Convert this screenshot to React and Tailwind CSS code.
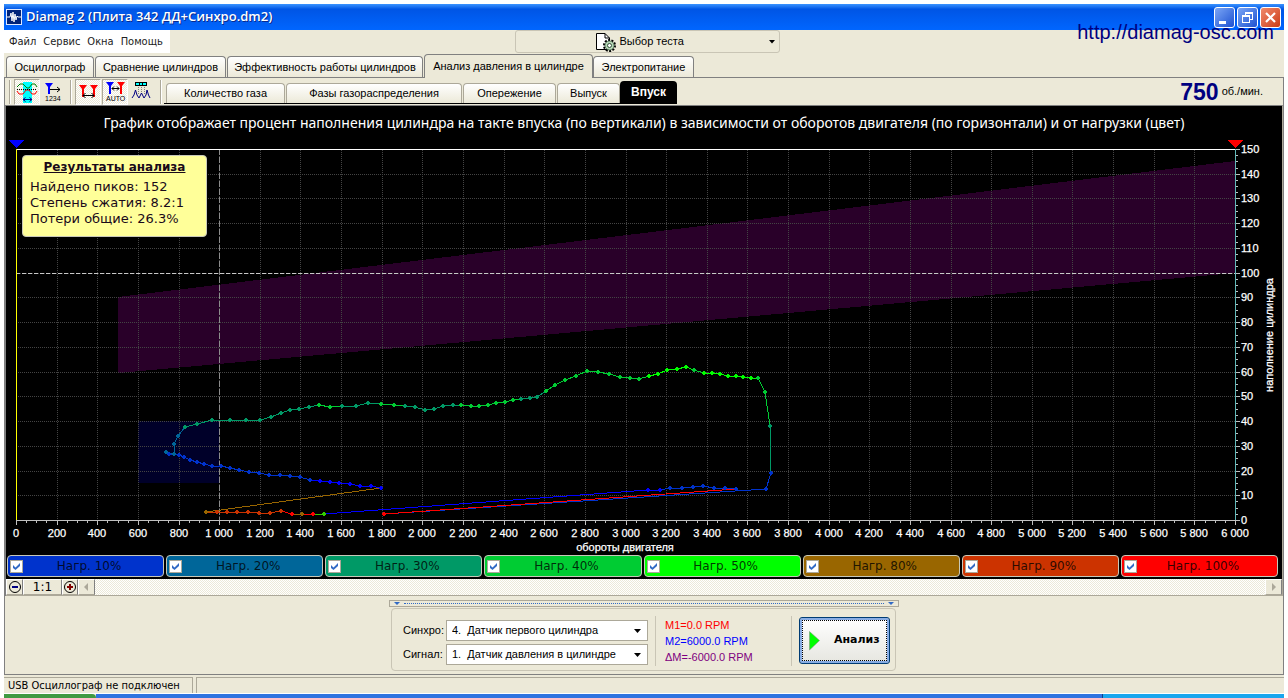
import { useState } from "react";

const LOADS = [
    { id: 10, label: "Нагр. 10%", bg: "bg-[#0033cc]" },
    { id: 20, label: "Нагр. 20%", bg: "bg-[#006699]" },
    { id: 30, label: "Нагр. 30%", bg: "bg-[#009966]" },
    { id: 40, label: "Нагр. 40%", bg: "bg-[#00cc33]" },
    { id: 50, label: "Нагр. 50%", bg: "bg-[#00ff00]" },
    { id: 80, label: "Нагр. 80%", bg: "bg-[#996600]" },
    { id: 90, label: "Нагр. 90%", bg: "bg-[#cc3300]" },
    { id: 100, label: "Нагр. 100%", bg: "bg-[#ff0000]" },
];

const COLORS = {
    0: "#0000ff",
    10: "#0033cc",
    20: "#006699",
    30: "#009966",
    40: "#00cc33",
    50: "#00ff00",
    60: "#33cc00",
    80: "#996600",
    90: "#cc3300",
    100: "#ff0000",
};

// measured cycle: x, y, load
const POINTS = [
    [384, 514, 100], [766, 489, 10], [771, 473, 10], [770, 426, 30], [765, 392, 40], [758, 378, 40],
    [751, 378, 50], [743, 377, 50], [736, 376, 50], [728, 376, 50], [720, 374, 50], [712, 373, 50],
    [704, 373, 50], [694, 370, 40], [686, 367, 50], [677, 369, 50], [667, 370, 50], [658, 374, 50],
    [649, 376, 50], [639, 379, 40], [630, 378, 40], [620, 377, 40], [609, 374, 40], [598, 372, 40],
    [587, 371, 40], [576, 376, 40], [565, 380, 40], [555, 385, 40], [546, 391, 40], [537, 397, 30],
    [530, 398, 30], [521, 399, 30], [513, 400, 40], [505, 402, 40], [496, 403, 40], [488, 405, 40],
    [479, 406, 40], [471, 406, 40], [461, 405, 40], [453, 405, 30], [443, 406, 30], [434, 409, 30],
    [425, 410, 30], [415, 407, 30], [405, 406, 30], [394, 405, 40], [381, 404, 40], [368, 403, 30],
    [356, 406, 30], [342, 406, 30], [330, 407, 40], [319, 405, 40], [309, 407, 30], [299, 409, 30],
    [290, 410, 30], [281, 413, 30], [271, 417, 30], [260, 420, 30], [246, 420, 30], [230, 420, 30],
    [212, 420, 30], [197, 424, 30], [185, 427, 30], [178, 436, 20], [174, 444, 20], [174, 454, 20],
    [166, 452, 20], [169, 454, 10], [179, 455, 10], [184, 457, 10], [190, 460, 10], [197, 462, 10],
    [204, 464, 10], [212, 466, 10], [221, 466, 10], [230, 468, 10], [239, 470, 10], [249, 472, 10],
    [259, 473, 10], [269, 475, 10], [280, 475, 10], [290, 476, 10], [300, 477, 10], [310, 480, 10],
    [320, 481, 0], [330, 482, 0], [339, 483, 0], [350, 484, 0], [360, 486, 0], [371, 486, 0],
    [381, 488, 0], [206, 512, 80], [217, 512, 90], [227, 512, 90], [237, 512, 90], [248, 512, 90],
    [259, 513, 90], [270, 513, 90], [281, 511, 90], [292, 514, 100], [302, 514, 80], [313, 514, 100],
    [324, 514, 60], [648, 490, 0], [660, 490, 0], [670, 488, 10], [682, 488, 10], [693, 487, 10],
    [703, 486, 10], [714, 488, 10], [725, 488, 10], [736, 489, 10], [384, 514, 100],
];

const LEFT = 16;
const RIGHT = 1235;
const TOP = 149;
const BOTTOM = 520;
const xOf = (rpm) => Math.round(LEFT + (rpm / 6000) * (RIGHT - LEFT));
const yOf = (v) => Math.round(BOTTOM - (v / 150) * (BOTTOM - TOP));
const range = (from, to, step) => {
    const list = [];
    for (let i = from; i <= to; i += step) list.push(i);
    return list;
};
const spaced = (n) => (n >= 1000 ? `${Math.floor(n / 1000)} ${String(n % 1000).padStart(3, "0")}` : `${n}`);

function Chart() {
    return (
        <svg viewBox="6 136 1276 419" className="block w-full h-auto" fontFamily="'Liberation Sans', Arial, sans-serif" fontSize="11" fill="#fff">
            <g shapeRendering="crispEdges">
                <path d="M118 297 L1235 161 V273 L118 373 Z" fill="#290029" />
                <rect x="138" y="421" width="81" height="62" fill="#000029" />

                {/* grid */}
                {range(200, 5800, 200).map((r) => (
                    <path key={r} d={`M${xOf(r) + 0.5} ${TOP + 1} V${BOTTOM}`} stroke="#444" strokeDasharray="1 1" fill="none" />
                ))}
                {range(10, 140, 10).map((v) => (
                    <path key={v} d={`M${LEFT} ${yOf(v) + 0.5} H${RIGHT}`} stroke="#444" strokeDasharray="1 1" fill="none" />
                ))}
                <path d="M16 273.5 H1235" stroke="#c8c8c8" strokeDasharray="4 2" />
                <path d="M219.5 149 V520" stroke="#8c8c8c" strokeDasharray="6 2" />

                {/* frame */}
                <path d="M16 149.5 H1239" stroke="#fff" />
                <path d="M16 520.5 H1239" stroke="#c0c0c0" />
                <path d="M16.5 149 V520" stroke="#ffff00" />
                <path d="M1235.5 149 V520" stroke="#5fb8b8" />

                {/* ticks */}
                {range(0, 6000, 50).map((r) => (
                    <path key={r} d={`M${xOf(r) + 0.5} 521 v${r % 200 === 0 ? 4 : 2}`} stroke="#c0c0c0" />
                ))}
                {range(0, 150, 2.5).map((v) => (
                    <path key={v} d={`M1236 ${yOf(v) + 0.5} h${v % 10 === 0 ? 4 : 2}`} stroke="#c0c0c0" />
                ))}

                <path d="M8 140 h16 l-8 8 Z" fill="#0000ff" />
                <path d="M1227 140 h16 l-8 8 Z" fill="#ff0000" />
            </g>

            <g shapeRendering="crispEdges">
                {POINTS.slice(1).map(([x, y, load], i) => (
                    <line key={i} x1={POINTS[i][0]} y1={POINTS[i][1]} x2={x} y2={y} stroke={COLORS[load]} />
                ))}
                {POINTS.map(([x, y, load], i) => (
                    <path key={i} d={`M${x - 1} ${y - 2} h2 v1 h1 v2 h-1 v1 h-2 v-1 h-1 v-2 h1 Z`} fill={COLORS[load]} />
                ))}
            </g>

            <g textAnchor="middle" stroke="#fff" strokeWidth="0.25">
                {range(0, 6000, 200).map((r) => (
                    <text key={r} x={xOf(r)} y="537">{spaced(r)}</text>
                ))}
                <text x="625" y="551">обороты двигателя</text>
                <text transform="translate(1273 335) rotate(-90)">наполнение цилиндра</text>
            </g>
            <g stroke="#fff" strokeWidth="0.25">
                {range(0, 150, 10).map((v) => (
                    <text key={v} x="1241" y={yOf(v) + 4}>{v}</text>
                ))}
            </g>
        </svg>
    );
}

function TitleBar() {
    const btn = "flex h-[21px] w-[21px] items-center justify-center rounded-[3px] border border-white text-white";
    return (
        <header className="flex h-[26px] items-center gap-1 bg-linear-to-b from-[#3a93ff] via-[#0055e5] via-20% to-[#0066ff] pl-[2px] pr-[3px]">
            <svg viewBox="0 0 16 16" className="h-4 w-4">
                <rect width="16" height="16" fill="#dfe8ff" />
                <rect x="1" y="1" width="14" height="14" fill="#00247a" />
                <path d="M1 8 H4 L5 4 L6 12 L7 3 L8 13 L9 5 L10 11 L11 7 L12 8 H15" stroke="#fff" fill="none" />
            </svg>
            <h1 className="flex-1 font-['Open_Sans','Noto_Sans',sans-serif] text-[13px] font-semibold text-white [text-shadow:1px_1px_#0a2a8c]">
                Diamag 2 (Плита 342 ДД+Синхро.dm2)
            </h1>
            <div className="flex gap-[2px]">
                <button aria-label="Свернуть" className={`${btn} bg-linear-to-br from-[#7ba5f5] to-[#1f4fd0]`}>
                    <svg viewBox="0 0 19 19" className="h-[19px] w-[19px]"><path d="M4 13 h7 v3 h-7 Z" fill="#fff" /></svg>
                </button>
                <button aria-label="Восстановить" className={`${btn} bg-linear-to-br from-[#7ba5f5] to-[#1f4fd0]`}>
                    <svg viewBox="0 0 19 19" className="h-[19px] w-[19px]" fill="none" stroke="#fff" shapeRendering="crispEdges">
                        <path d="M7.5 7 V4.5 H14.5 V11.5 H12 M7 5.5 H15" />
                        <path d="M4.5 7.5 H11.5 V14.5 H4.5 Z M4 8.5 H12" />
                    </svg>
                </button>
                <button aria-label="Закрыть" className={`${btn} bg-linear-to-br from-[#f0896a] to-[#cc3a10]`}>
                    <svg viewBox="0 0 19 19" className="h-[19px] w-[19px]"><path d="M5 5 L14 14 M14 5 L5 14" stroke="#fff" strokeWidth="2.2" /></svg>
                </button>
            </div>
        </header>
    );
}

function MenuRow() {
    return (
        <div className="flex h-6 items-start">
            <nav className="flex h-[23px] w-[166px] items-center gap-[7px] bg-white pt-[2px] pl-[5px] font-['DejaVu_Sans_Condensed','DejaVu_Sans',sans-serif] text-[11px] text-[#222]">
                <button>Файл</button>
                <button>Сервис</button>
                <button>Окна</button>
                <button>Помощь</button>
            </nav>
            <div className="flex flex-1 justify-center pr-[160px]">
                <button className="flex h-[23px] w-[265px] items-center justify-end rounded-[3px] border border-[#c9c5b5] pr-1">
                    <svg viewBox="0 0 20 20" className="mr-1 h-5 w-5">
                        <path d="M0.5 1.5 H9 L13.5 6 V17.5 H0.5 Z" fill="#fff" stroke="#000" />
                        <path d="M9 1.5 V6 H13.5" fill="none" stroke="#000" />
                        <circle cx="13.5" cy="13.5" r="5.5" fill="none" stroke="#000" strokeWidth="2" strokeDasharray="2 1.4" />
                        <circle cx="13.5" cy="13.5" r="4.5" fill="#b5d6b5" stroke="#31513a" strokeWidth="0.7" />
                        <circle cx="13.5" cy="13.5" r="2" fill="#fff" stroke="#31513a" />
                    </svg>
                    <span className="w-[149px] text-left">Выбор теста</span>
                    <svg viewBox="0 0 6 4" className="h-1 w-1.5"><path d="M0 0 H6 L3 3.5 Z" /></svg>
                </button>
            </div>
        </div>
    );
}

function MainTabs() {
    const tab = "h-[21px] rounded-t-[4px] border border-b-0 border-[#808080] bg-linear-to-b from-white to-[#ece9d8] whitespace-nowrap";
    return (
        <div className="flex h-6 items-end gap-px border-b border-[#808080] pl-[2px]">
            <button className={`${tab} w-[88px]`}>Осциллограф</button>
            <button className={`${tab} w-[131px]`}>Сравнение цилиндров</button>
            <button className={`${tab} w-[196px]`}>Эффективность работы цилиндров</button>
            <button className="-mb-px h-6 w-[169px] rounded-t-[4px] border border-b-0 border-[#808080] bg-[#ece9d8] whitespace-nowrap">
                Анализ давления в цилиндре
            </button>
            <button className={`${tab} -ml-px w-[101px]`}>Электропитание</button>
        </div>
    );
}

const HATCH = "bg-[repeating-conic-gradient(#ffffff_0_25%,#ece9d8_0_50%)] bg-[length:2px_2px]";

function Separator() {
    return <span className="h-6 w-[2px] border-l border-[#aca899] bg-white" />;
}

function ToolButton({ label, pressed, children }) {
    return (
        <button
            aria-label={label}
            aria-pressed={pressed}
            className={`h-[26px] w-[26px] border ${pressed ? `${HATCH} border-t-[#aca899] border-l-[#aca899] border-r-white border-b-white` : "border-transparent"}`}
        >
            <svg viewBox="0 0 24 24" className="h-6 w-6" fill="none">{children}</svg>
        </button>
    );
}

function Toolbar() {
    const tab = "h-5 rounded-t-[4px] border border-b-0 border-[#aca899] bg-linear-to-b from-white to-[#ece9d8] whitespace-nowrap";
    return (
        <div className="flex h-[27px] items-center pl-1">
            <Separator />
            <div className="flex items-center gap-px px-[3px]">
                <ToolButton label="Фазы" pressed>
                    <path d="M8 2 H17 V23 H8 Z" fill="#00ffff" />
                    <path d="M2 7 L5 4 H8 L12 8 H14 L17 4 H20 L22 7" stroke="#008000" />
                    <path d="M2 11 L4 14 H8 L11 10 H14 L17 14 H20 L22 11" stroke="#ff0000" />
                    <path d="M2 9.5 H22" stroke="#000" strokeDasharray="1 1" />
                    <path d="M8 19.5 H17 M10.5 17.5 L8 19.5 L10.5 21.5 M14.5 17.5 L17 19.5 L14.5 21.5" stroke="#000080" />
                </ToolButton>
                <ToolButton label="Нумерация">
                    <path d="M3 3 H11 L8 7 V14 H6 V7 Z" fill="#0000ff" />
                    <path d="M8 9.5 H18 M15 7 L18 9.5 L15 12" stroke="#000" />
                    <text x="3" y="21" fontSize="7" fill="#000" fontFamily="'Liberation Sans', sans-serif">1234</text>
                </ToolButton>
            </div>
            <Separator />
            <div className="flex items-center gap-px pr-[5px] pl-[3px]">
                <ToolButton label="Маркеры" pressed>
                    <path d="M3 5 H11 L8 9 V17 H6 V9 Z M14 5 H22 L19 9 V17 H17 V9 Z" fill="#ff0000" />
                    <path d="M7 15.5 H18 M9.5 13 L7 15.5 L9.5 18 M15.5 13 L18 15.5 L15.5 18" stroke="#000" />
                </ToolButton>
                <ToolButton label="Автоматические маркеры" pressed>
                    <path d="M3 2 H11 L8 6 V14 H6 V6 Z" fill="#0000ff" />
                    <path d="M14 2 H22 L19 6 V14 H17 V6 Z" fill="#ff0000" />
                    <path d="M9 8.5 H16 M11 6.5 L9 8.5 L11 10.5 M14 6.5 L16 8.5 L14 10.5" stroke="#000" />
                    <text x="3" y="21" fontSize="7" fill="#000" fontFamily="'Liberation Sans', sans-serif">AUTO</text>
                </ToolButton>
                <ToolButton label="Осциллограмма">
                    <path d="M5 2 H17 V6 H5 Z" fill="#000" />
                    <path d="M6 3 H9 V5 H6 Z M10 3 H12 V5 H10 Z M13 3 H16 V5 H13 Z" fill="#00ffff" />
                    <path d="M8.5 7 V14 M11.5 7 V14 M14.5 7 V14" stroke="#808080" strokeDasharray="1 1" />
                    <path d="M2 18 L4 15 L5.5 10 L7 15 L9 18 L11.5 13 L14 18 L16 15 L17 10 L18.5 15 L20 18" stroke="#000080" />
                </ToolButton>
            </div>
            <Separator />
            <div className="flex h-full flex-1 items-end pl-[2px] pb-px">
                <div className="flex items-end gap-px border-b border-black pl-[2px]">
                    <button className={`${tab} w-[119px]`}>Количество газа</button>
                    <button className={`${tab} w-[176px]`}>Фазы газораспределения</button>
                    <button className={`${tab} w-[93px]`}>Опережение</button>
                    <button className={`${tab} w-[63px]`}>Выпуск</button>
                    <button className="-ml-px h-[22px] w-[57px] rounded-t-[4px] bg-black text-[12px] font-bold text-white">Впуск</button>
                </div>
            </div>
            <p className="flex items-center gap-[3px] pr-5">
                <b className="text-[23px] leading-6 text-[#000080]">750</b>
                <span>об./мин.</span>
            </p>
        </div>
    );
}

function Results() {
    return (
        <section className="absolute top-[49px] left-[16px] h-[82px] w-[185px] rounded-[4px] border border-[#c8c8b8] bg-[#ffff99] px-[7px] pt-[3px] text-[13px] leading-4 text-[#1a0a1a]">
            <h2 className="mb-1 text-center text-[12px] leading-4 font-bold underline">Результаты анализа</h2>
            <p>Найдено пиков: 152</p>
            <p>Степень сжатия: 8.2:1</p>
            <p>Потери общие: 26.3%</p>
        </section>
    );
}

function LoadToggle({ label, bg }) {
    const [checked, setChecked] = useState(true);
    return (
        <label className={`flex h-[22px] items-center rounded-[4px] border border-[#c8c8b8] pl-[2px] pr-2 text-[12px] ${bg}`}>
            <span className="relative h-[13px] w-[13px]">
                <input
                    type="checkbox"
                    checked={checked}
                    onChange={(e) => setChecked(e.target.checked)}
                    className="block h-[13px] w-[13px] appearance-none border border-[#aca899] bg-white"
                />
                {checked && (
                    <svg viewBox="0 0 13 13" className="pointer-events-none absolute inset-0 h-[13px] w-[13px]">
                        <path d="M3 5 L5.5 7.5 L10 3 V6 L5.5 10 L3 8 Z" fill="#316ac5" />
                    </svg>
                )}
            </span>
            <span className="flex-1 text-center text-black/80">{label}</span>
        </label>
    );
}

function ScrollRow() {
    const btn = "flex h-4 items-center justify-center border border-t-white border-l-white border-r-[#808080] border-b-[#aca899] bg-[#ece9d8]";
    return (
        <div className="flex h-[17px] border-b border-[#aca899]">
            <button aria-label="Уменьшить" className={`${btn} w-[17px]`}>
                <svg viewBox="0 0 14 14" className="h-[14px] w-[14px]" fill="none">
                    <circle cx="7" cy="7" r="5.5" stroke="#000" /><path d="M4 7 H10" stroke="#000080" strokeWidth="2" />
                </svg>
            </button>
            <button className={`${btn} w-[39px] font-['DejaVu_Sans',sans-serif] text-[12px]`}>1:1</button>
            <button aria-label="Увеличить" className={`${btn} w-4`}>
                <svg viewBox="0 0 14 14" className="h-[14px] w-[14px]" fill="none">
                    <circle cx="7" cy="7" r="5.5" stroke="#000" /><path d="M4 7 H10 M7 4 V10" stroke="#800000" strokeWidth="2" />
                </svg>
            </button>
            <button aria-label="Влево" className={`${btn} w-[17px]`}>
                <svg viewBox="0 0 5 8" className="h-2 w-[5px]"><path d="M4 0 V8 L0 4 Z" fill="#aca899" /></svg>
            </button>
            <div className={`flex-1 ${HATCH}`} />
            <button aria-label="Вправо" className={`${btn} w-[17px]`}>
                <svg viewBox="0 0 5 8" className="h-2 w-[5px]"><path d="M1 0 V8 L5 4 Z" fill="#aca899" /></svg>
            </button>
        </div>
    );
}

function Source({ id, label, value, options }) {
    return (
        <div className="flex h-[21px] items-center gap-1">
            <label htmlFor={id} className="w-[39px] whitespace-nowrap">{label}</label>
            <div className="relative">
                <select id={id} defaultValue={value} className="block h-[21px] w-[202px] appearance-none border border-[#aca899] bg-white pl-[5px]">
                    {options.map((o) => <option key={o} value={o}>{o}</option>)}
                </select>
                <svg viewBox="0 0 7 4" className="pointer-events-none absolute top-[9px] right-[7px] h-1 w-[7px]"><path d="M0 0 H7 L3.5 4 Z" /></svg>
            </div>
        </div>
    );
}

const FIRST = "4.\u00a0 Датчик первого цилиндра";
const PRESSURE = "1.\u00a0 Датчик давления в цилиндре";

function ControlPanel() {
    return (
        <div className="flex flex-col items-center pt-1 pb-[3px] pr-px">
            <button aria-label="Свернуть панель" className="flex h-[7px] w-[510px] items-center gap-1 border border-[#aca899] px-1">
                <svg viewBox="0 0 6 3" className="h-[3px] w-1.5"><path d="M0 0 H6 L3 3 Z" fill="#316ac5" /></svg>
                <span className="flex-1 border-t border-dotted border-[#316ac5]" />
                <svg viewBox="0 0 6 3" className="h-[3px] w-1.5"><path d="M0 0 H6 L3 3 Z" fill="#316ac5" /></svg>
            </button>
            <div className="mt-px flex h-[63px] w-[505px] items-center rounded-[4px] border border-[#c9c5b5] pt-[2px] pl-[11px] pr-[5px]">
                <div className="flex flex-col gap-[3px] pt-1">
                    <Source id="sync" label="Синхро:" value={FIRST} options={[FIRST, PRESSURE]} />
                    <Source id="signal" label="Сигнал:" value={PRESSURE} options={[FIRST, PRESSURE]} />
                </div>
                <div className="ml-[7px] flex h-[50px] w-[137px] flex-col justify-center border-x border-[#c9c5b5] pl-[9px] leading-4">
                    <p className="text-[#ff0000]">M1=0.0 RPM</p>
                    <p className="text-[#0000ff]">M2=6000.0 RPM</p>
                    <p className="text-[#800080]">ΔM=-6000.0 RPM</p>
                </div>
                <button className="ml-[7px] flex h-[47px] flex-1 items-center rounded-[3px] border border-[#003c74] bg-linear-to-b from-white to-[#e6e6e0] p-[2px] shadow-[inset_0_0_0_2px_#89ade4]">
                    <span className="flex h-full w-full items-center gap-[14px] border border-dotted border-black pl-[6px] font-['DejaVu_Sans',sans-serif] font-bold">
                        <svg viewBox="0 0 11 20" className="h-5 w-[11px]"><path d="M0.5 0.5 V19 L10.5 9.5 Z" fill="#00ff00" stroke="#808080" strokeWidth="0.5" /></svg>
                        Анализ
                    </span>
                </button>
            </div>
        </div>
    );
}

export default function App() {
    return (
        <div className="bg-white px-1 pt-1 font-['Liberation_Sans',Arial,sans-serif] text-[11px] text-black">
            <div className="relative bg-[#ece9d8]">
                <TitleBar />
                <a href="http://diamag-osc.com" className="absolute top-[16px] right-[10px] text-[20px] leading-6 text-[#000080]">
                    http://diamag-osc.com
                </a>
                <MenuRow />
                <MainTabs />
                <main className="border-x border-b border-[#808080]">
                    <Toolbar />
                    <div className="border-t border-r border-l border-t-[#808080] border-r-[#aca899] border-l-[#808080]">
                        <div className="relative bg-black pb-[2px] font-['DejaVu_Sans',Verdana,sans-serif]">
                            <h2 className="h-[30px] pt-2 text-center font-['Noto_Sans',sans-serif] text-[14px] leading-[18px] text-white">
                                График отображает процент наполнения цилиндра на такте впуска (по вертикали) в зависимости от оборотов двигателя (по горизонтали) и от нагрузки (цвет)
                            </h2>
                            <Chart />
                            <Results />
                            <div className="grid grid-cols-8 gap-[2px] pl-px pr-1">
                                {LOADS.map((l) => <LoadToggle key={l.id} label={l.label} bg={l.bg} />)}
                            </div>
                        </div>
                        <ScrollRow />
                    </div>
                    <ControlPanel />
                </main>
                <footer className="flex gap-[3px] border-b border-white pt-[2px] font-['DejaVu_Sans_Condensed','DejaVu_Sans',sans-serif]">
                    <p className="h-4 w-[189px] border-t border-r border-[#aca899] pl-1 leading-4 whitespace-nowrap">USB Осциллограф не подключен</p>
                    <p className="h-4 flex-1 border-t border-l border-[#aca899]" />
                </footer>
                <div className="flex h-1">
                    <span className="w-[92px] rounded-tr-[4px] bg-[#3f9a42]" />
                    <span className="flex-1 bg-[#2f74e0]" />
                    <span className="w-[182px] border-l border-[#10408c] bg-[#19a6ee]" />
                </div>
            </div>
        </div>
    );
}
